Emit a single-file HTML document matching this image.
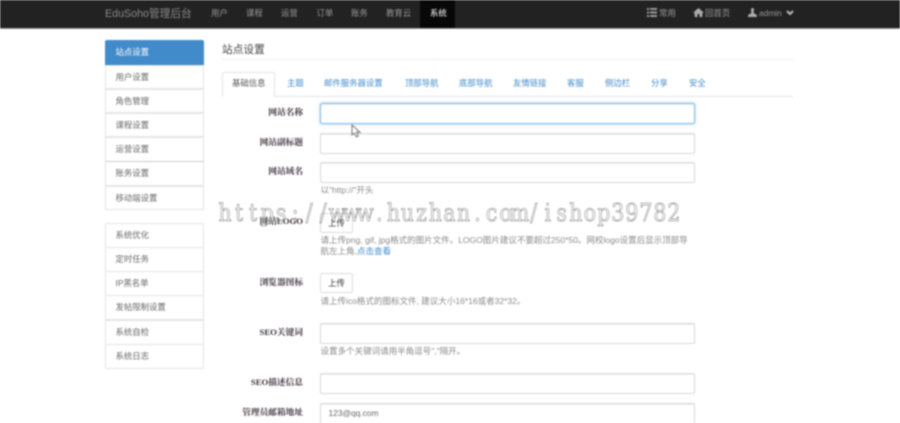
<!DOCTYPE html>
<html><head><meta charset="utf-8">
<style>
html,body{margin:0;padding:0;background:#fff;width:900px;height:423px;overflow:hidden}
#w{position:relative;width:900px;height:423px;overflow:hidden;filter:blur(.7px);font-family:"Liberation Sans","Noto Sans CJK SC",sans-serif;font-size:8.4px;color:#555}
#w div,#w span,#w svg{position:absolute}
.t{white-space:nowrap;line-height:12px}
.nav{color:#999;top:7px}
.item{left:105px;width:99px;height:24px;box-sizing:border-box;border:1px solid #e4e4e4;background:#fff;line-height:22px;padding-left:9.5px;color:#666}
.tab{top:77px;color:#428bca;white-space:nowrap;line-height:12px}
.lb{right:597px;font-weight:bold;font-size:8.7px;color:#3a2f3a;white-space:nowrap;line-height:12px;font-family:"Liberation Serif","Noto Serif CJK SC",serif}
.in{left:320px;width:375px;height:21px;box-sizing:border-box;border:1px solid #d8d8d8;border-radius:2px;background:#fff;box-shadow:inset 0 1px 1px rgba(0,0,0,.07)}
.btn{left:320px;width:33px;height:20px;box-sizing:border-box;border:1px solid #ddd;border-radius:2px;background:#fff;text-align:center;line-height:18px;color:#333}
.h{left:320.5px;color:#8a8a8a;white-space:nowrap;line-height:11px;font-size:8.52px}
</style></head><body><div id="w">
<div style="left:0;top:0;width:900px;height:28px;background:#222"></div>
<div style="left:0;top:28px;width:900px;height:1px;background:#999"></div>
<div class="t" style="left:105px;top:8px;font-size:10.7px;color:#8a8a8a">EduSoho管理后台</div>
<div class="t nav" style="left:211px">用户</div>
<div class="t nav" style="left:246px">课程</div>
<div class="t nav" style="left:281px">运营</div>
<div class="t nav" style="left:316.500px">订单</div>
<div class="t nav" style="left:351px">账务</div>
<div class="t nav" style="left:386px">教育云</div>
<div style="left:420px;top:0;width:35px;height:28px;background:#080808"></div>
<div class="t nav" style="left:430px;color:#fff">系统</div>
<svg style="left:647px;top:8px" width="10" height="9" viewBox="0 0 10 9"><path d="M0 0h2v2H0zM3 0h7v2H3zM0 3.500h2v2H0zM3 3.500h7v2H3zM0 7h2v2H0zM3 7h7v2H3z" fill="#999"/></svg>
<div class="t nav" style="left:659px">常用</div>
<svg style="left:693px;top:8px" width="11" height="9" viewBox="0 0 11 9"><path d="M5.500 0L11 4.800h-1.600V9H6.500V6h-2v3H1.600V4.800H0z" fill="#aaa"/></svg>
<div class="t nav" style="left:705px">回首页</div>
<svg style="left:748px;top:8px" width="9" height="9" viewBox="0 0 10 10"><path d="M3.300 1.500C3.300.5 4 0 5 0s1.700.5 1.700 1.500S6.300 4 6.200 5.200C6.500 6.500 10 7 10 8.500V10H0V8.500C0 7 3.500 6.500 3.800 5.200 3.700 4 3.300 2.500 3.300 1.500z" fill="#aaa"/></svg>
<div class="t nav" style="left:759px">admin</div>
<svg style="left:786px;top:9.500px" width="8" height="6" viewBox="0 0 8 6"><path d="M1 1l3 3 3-3" fill="none" stroke="#bbb" stroke-width="2"/></svg>

<div class="item" style="top:40px;height:25px;background:#428bca;border-color:#428bca;color:#fff;border-radius:2px 2px 0 0">站点设置</div>
<div class="item" style="top:65px">用户设置</div>
<div class="item" style="top:89px">角色管理</div>
<div class="item" style="top:113px">课程设置</div>
<div class="item" style="top:137px;height:25px">运营设置</div>
<div class="item" style="top:161px;height:25px;border-top:1px solid #ccc">账务设置</div>
<div class="item" style="top:186px;height:24px">移动端设置</div>

<div class="item" style="top:223px;height:25px;border-radius:2px 2px 0 0">系统优化</div>
<div class="item" style="top:247px;height:25px">定时任务</div>
<div class="item" style="top:271px;height:25px">IP黑名单</div>
<div class="item" style="top:295px;height:25px">发帖限制设置</div>
<div class="item" style="top:320px;height:25px">系统自检</div>
<div class="item" style="top:344px;height:25px;border-radius:0 0 2px 2px">系统日志</div>

<div class="t" style="left:222px;top:43px;font-size:10.700px;line-height:14px;color:#444">站点设置</div>
<div style="left:222px;top:59px;width:571px;height:1px;background:#eee"></div>

<div style="left:222px;top:96px;width:571px;height:1px;background:#e4e4e4"></div>
<div style="left:222px;top:72px;width:53px;height:25px;box-sizing:border-box;border:1px solid #e4e4e4;border-bottom:0;background:#fff;border-radius:2px 2px 0 0"></div>
<div class="tab" style="left:232px;color:#555">基础信息</div>
<div class="tab" style="left:287px">主题</div>
<div class="tab" style="left:324px">邮件服务器设置</div>
<div class="tab" style="left:405px">顶部导航</div>
<div class="tab" style="left:459px">底部导航</div>
<div class="tab" style="left:513px">友情链接</div>
<div class="tab" style="left:567px">客服</div>
<div class="tab" style="left:605px">侧边栏</div>
<div class="tab" style="left:651px">分享</div>
<div class="tab" style="left:689px">安全</div>

<div class="in" style="top:103px;border-color:#7fbcec;box-shadow:inset 0 1px 1px rgba(0,0,0,.07),0 0 3px rgba(102,175,233,.6)"></div>
<div class="lb" style="top:106px">网站名称</div>
<div class="in" style="top:133px"></div>
<div class="lb" style="top:136px">网站副标题</div>
<div class="in" style="top:162px"></div>
<div class="lb" style="top:165px">网站域名</div>
<div class="h" style="top:185px">以"http://"开头</div>

<div class="btn" style="top:213px">上传</div>
<div class="lb" style="top:215px">网站LOGO</div>
<div class="h" style="top:235px">请上传png, gif, jpg格式的图片文件。LOGO图片建议不要超过250*50。网校logo设置后显示顶部导</div>
<div class="h" style="top:246px">航左上角,<span style="position:static;color:#428bca">点击查看</span></div>

<div class="lb" style="top:276px">浏览器图标</div>
<div class="btn" style="top:273px">上传</div>
<div class="h" style="top:296px">请上传ico格式的图标文件, 建议大小16*16或者32*32。</div>

<div class="lb" style="top:326px">SEO关键词</div>
<div class="in" style="top:323px"></div>
<div class="h" style="top:346px">设置多个关键词请用半角逗号","隔开。</div>

<div class="lb" style="top:376px">SEO描述信息</div>
<div class="in" style="top:373px"></div>
<div class="lb" style="top:406px">管理员邮箱地址</div>
<div class="in" style="top:403px;line-height:18px;padding-left:7.500px;color:#666">123@qq.com</div>

<svg style="left:351px;top:124px" width="11" height="14" viewBox="0 0 11 14"><path d="M1 1v10l2.500-2 1.800 4 2-1-1.800-3.800H9z" fill="#fff" stroke="#777" stroke-width="1"/></svg>

<svg style="left:0;top:0" width="900" height="423" viewBox="0 0 900 423"><g transform="scale(.85 1)"><text y="221" font-family="'DejaVu Serif',serif" font-size="24" fill="none" stroke="#777" stroke-width=".55" x="257.1 276.5 293 306.6 324.6 343.2 359.7 376.2 386.5 403 419.5 442.5 455.1 471.6 489.6 504.6 521.6 537.7 558 571.6 587.6 599.9 623.8 640.6 654.7 669.7 686.7 702.7 719.2 735.7 752.2 768.7 785.2">https://www.huzhan.com/ishop39782</text></g></svg>
</div></body></html>
